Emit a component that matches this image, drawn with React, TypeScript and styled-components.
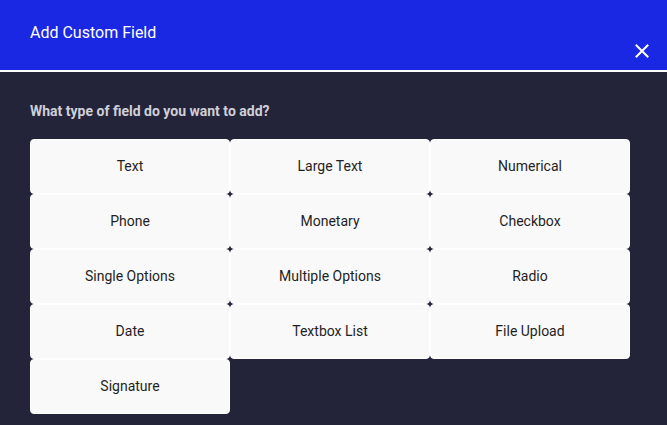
import styled, { createGlobalStyle } from 'styled-components'

const GlobalStyle = createGlobalStyle`
  html, body {
    margin: 0;
    padding: 0;
    background: #23243a;
    font-family: Roboto, "Liberation Sans", sans-serif;
  }
  * {
    box-sizing: border-box;
  }
`

const fieldTypes = [
  'Text',
  'Large Text',
  'Numerical',
  'Phone',
  'Monetary',
  'Checkbox',
  'Single Options',
  'Multiple Options',
  'Radio',
  'Date',
  'Textbox List',
  'File Upload',
  'Signature',
]

const Modal = styled.div`
  width: 667px;
  min-height: 425px;
  background: #23243a;
`

const Header = styled.header`
  position: relative;
  height: 72px;
  background: #1a28e4;
  border-bottom: 2px solid #ffffff;
  padding: 23px 30px 0;
`

const HeaderTitle = styled.h2`
  margin: 0;
  color: #ffffff;
  font-size: 16px;
  font-weight: 400;
  line-height: 20px;
`

const CloseButton = styled.button`
  position: absolute;
  right: 16px;
  bottom: 10px;
  width: 18px;
  height: 18px;
  padding: 0;
  border: none;
  background: transparent;
  cursor: pointer;
  display: flex;
  align-items: center;
  justify-content: center;
`

const Body = styled.div`
  padding: 31px 30px 11px;
`

const Question = styled.p`
  margin: 0 0 19px;
  color: #cfd0d6;
  font-size: 14px;
  font-weight: 700;
  line-height: 17px;
`

const Grid = styled.div`
  display: grid;
  grid-template-columns: repeat(3, 200px);
  grid-auto-rows: 55px;
`

const FieldButton = styled.button`
  border: 1px solid #ffffff;
  border-radius: 4px;
  background: #f9f9f9;
  color: #1f1f24;
  font-family: Roboto, "Liberation Sans", sans-serif;
  font-size: 14px;
  font-weight: 400;
  line-height: 16px;
  cursor: pointer;
  display: flex;
  align-items: center;
  justify-content: center;
  padding: 0 0 2px;

  &:hover {
    background: #eeeef4;
  }
`

export default function App() {
  return (
    <>
      <GlobalStyle />
      <Modal>
        <Header>
          <HeaderTitle>Add Custom Field</HeaderTitle>
          <CloseButton aria-label="Close">
            <svg width="14" height="14" viewBox="0 0 14 14">
              <path d="M1.5 1.5 L12.5 12.5 M12.5 1.5 L1.5 12.5" stroke="#ffffff" strokeWidth="2" strokeLinecap="square" />
            </svg>
          </CloseButton>
        </Header>
        <Body>
          <Question>What type of field do you want to add?</Question>
          <Grid>
            {fieldTypes.map((f) => (
              <FieldButton key={f}>{f}</FieldButton>
            ))}
          </Grid>
        </Body>
      </Modal>
    </>
  )
}
